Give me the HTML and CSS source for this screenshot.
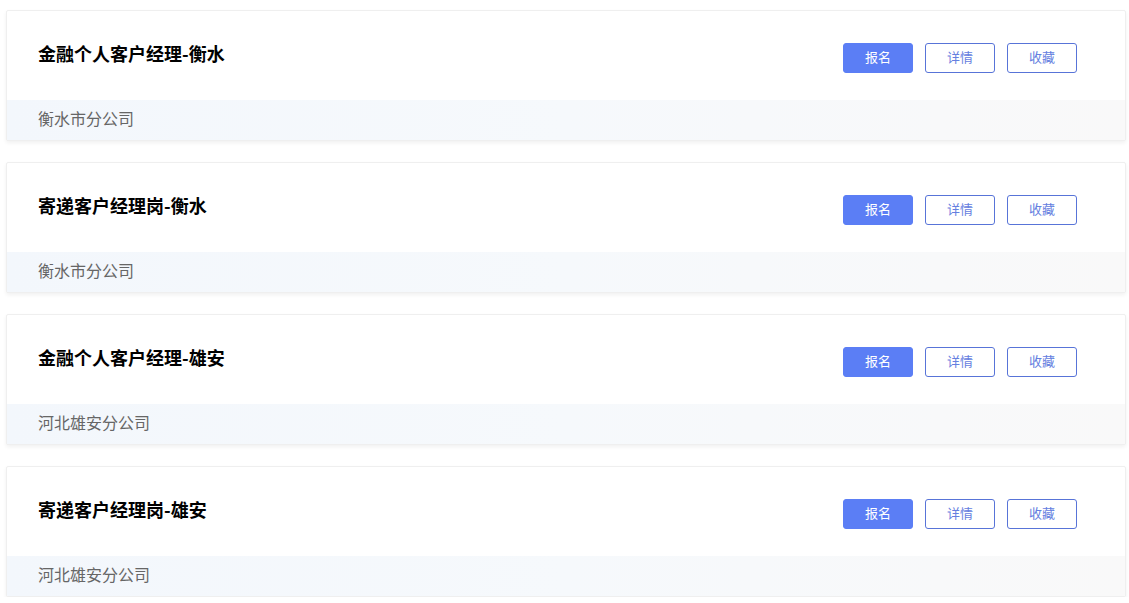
FILE: index.html
```html
<!DOCTYPE html>
<html lang="zh-CN">
<head>
<meta charset="utf-8">
<title>岗位列表</title>
<link rel="stylesheet" href="styles.css">
</head>
<body>
<div class="list">
  <div class="card">
    <div class="card-top">
      <div class="title">金融个人客户经理-衡水</div>
      <div class="actions">
        <button class="btn primary">报名</button>
        <button class="btn outline">详情</button>
        <button class="btn outline">收藏</button>
      </div>
    </div>
    <div class="card-bottom">衡水市分公司</div>
  </div>
  <div class="card">
    <div class="card-top">
      <div class="title">寄递客户经理岗-衡水</div>
      <div class="actions">
        <button class="btn primary">报名</button>
        <button class="btn outline">详情</button>
        <button class="btn outline">收藏</button>
      </div>
    </div>
    <div class="card-bottom">衡水市分公司</div>
  </div>
  <div class="card">
    <div class="card-top">
      <div class="title">金融个人客户经理-雄安</div>
      <div class="actions">
        <button class="btn primary">报名</button>
        <button class="btn outline">详情</button>
        <button class="btn outline">收藏</button>
      </div>
    </div>
    <div class="card-bottom">河北雄安分公司</div>
  </div>
  <div class="card">
    <div class="card-top">
      <div class="title">寄递客户经理岗-雄安</div>
      <div class="actions">
        <button class="btn primary">报名</button>
        <button class="btn outline">详情</button>
        <button class="btn outline">收藏</button>
      </div>
    </div>
    <div class="card-bottom">河北雄安分公司</div>
  </div>
</div>
</body>
</html>
```
FILE: styles.css
```css
html, body {
  margin: 0;
  padding: 0;
  background: #ffffff;
  font-family: "Noto Sans CJK SC", "Noto Sans", sans-serif;
}
.list {
  display: flex;
  flex-direction: column;
  gap: 21px;
  padding: 10px 3px 0 6px;
}
.card {
  border: 1px solid #efefef;
  border-radius: 2px;
  background: #fff;
  box-shadow: 0 2px 4px rgba(0, 0, 0, 0.06);
  overflow: hidden;
}
.card-top {
  height: 89px;
  display: flex;
  align-items: center;
  justify-content: space-between;
  padding: 0 48px 0 31px;
}
.title {
  font-size: 18px;
  font-weight: 700;
  color: #000;
  margin-top: -5px;
}
.actions {
  display: flex;
  gap: 12px;
  margin-top: 4px;
}
.btn {
  width: 70px;
  height: 30px;
  border-radius: 3px;
  font-family: "Noto Sans CJK SC", sans-serif;
  font-size: 13px;
  line-height: 1;
  padding: 0 0 2px;
  cursor: pointer;
}
.primary {
  background: #5b7ef5;
  border: 1px solid #5b7ef5;
  color: #fff;
}
.outline {
  background: #fff;
  border: 1px solid #5874d8;
  color: #6580e0;
}
.card-bottom {
  height: 40px;
  display: flex;
  align-items: center;
  padding-left: 31px;
  padding-bottom: 5px;
  box-sizing: border-box;
  font-size: 16px;
  color: #666;
  background: linear-gradient(90deg, #f3f7fc 0%, #f6f9fc 50%, #f9f9f9 100%);
}
```
